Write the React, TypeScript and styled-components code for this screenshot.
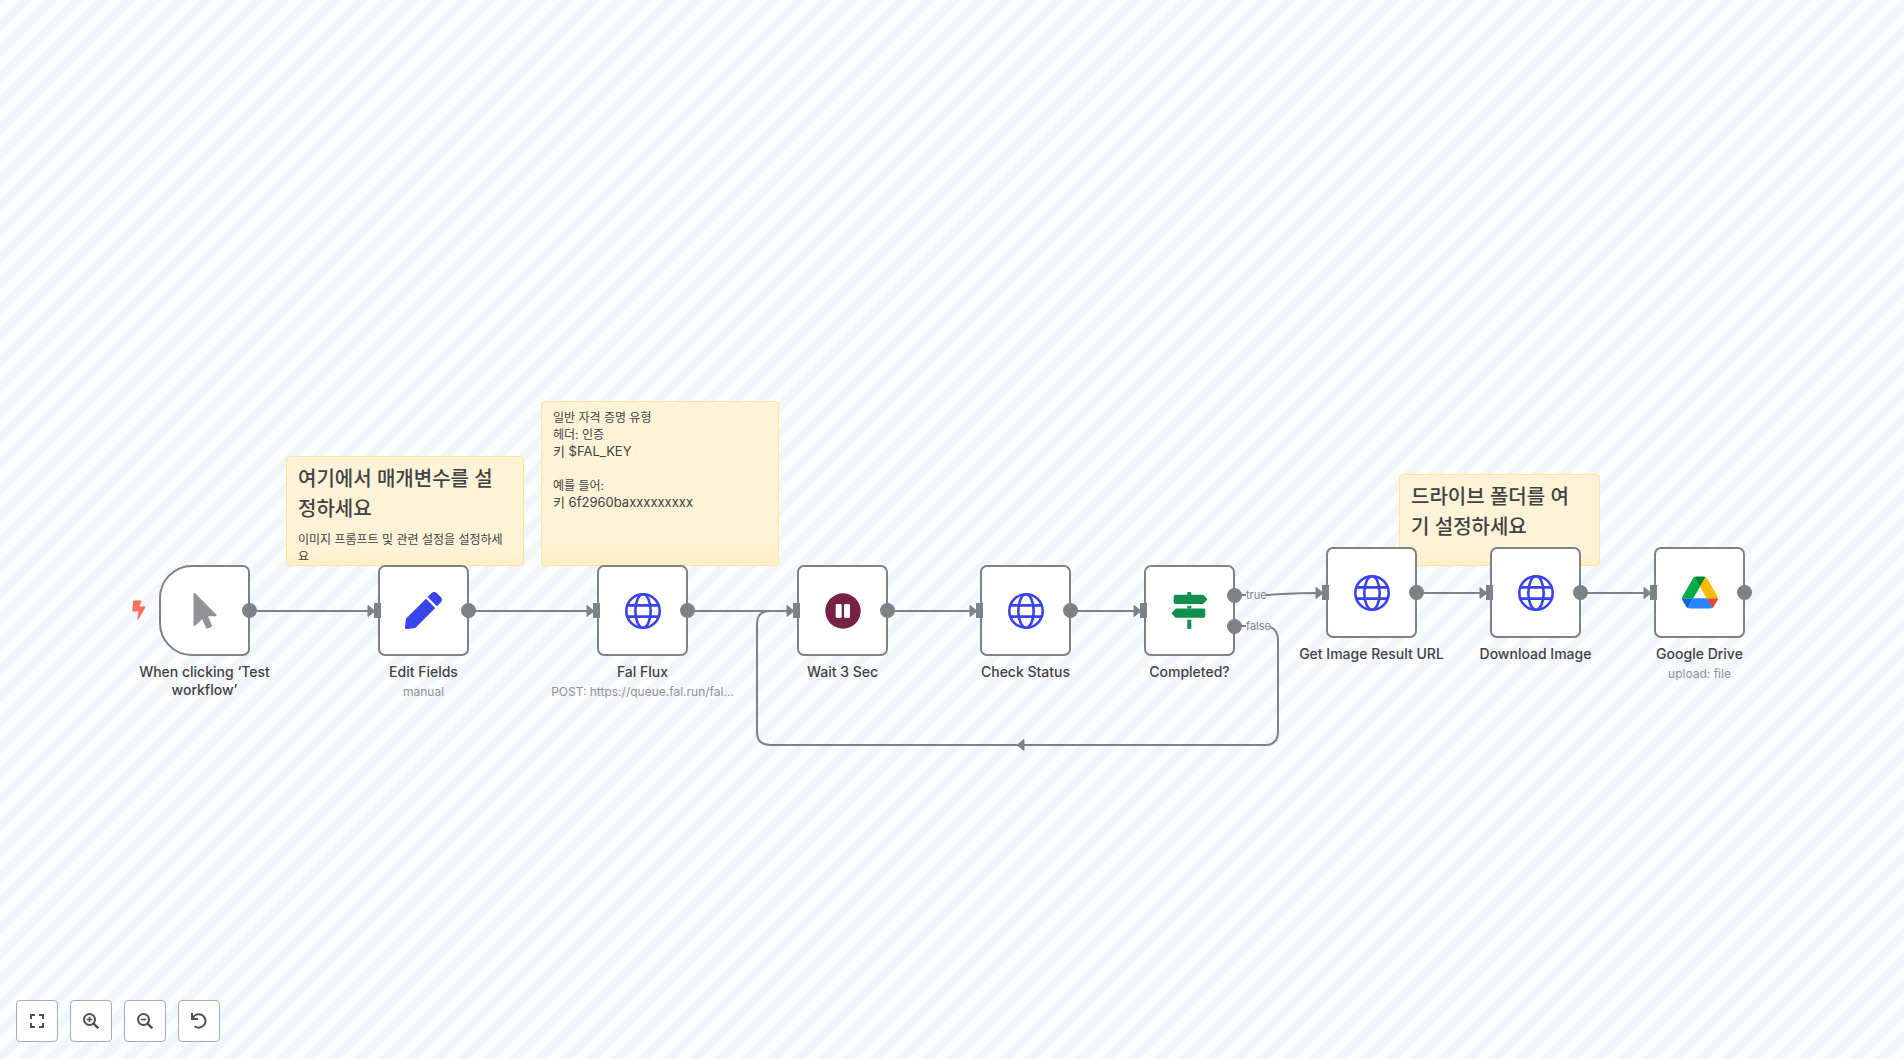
import React from "react";
import styled, { createGlobalStyle } from "styled-components";

const GRAY = "#7e8186";

const GlobalStyle = createGlobalStyle`
  * { box-sizing: border-box; }
  body { margin: 0; overflow: hidden; font-family: Inter, "Noto Sans CJK KR", sans-serif; color: #414244; }
`;

const Page = styled.main`
  position: relative;
  min-height: 100vh;
  display: flex;
  flex-direction: column;
  justify-content: flex-end;
  background: #f4f5fb;
`;

const Canvas = styled.div`
  position: absolute;
  inset: 0;
`;

const Layer = styled.svg`
  position: absolute;
  inset: 0;
  width: 100%;
  height: 100%;
`;

const Note = styled.section<{ $x: number; $y: number; $w: number; $h: number }>`
  position: absolute;
  left: ${(p) => p.$x}px;
  top: ${(p) => p.$y}px;
  width: ${(p) => p.$w}px;
  height: ${(p) => p.$h}px;
  padding: 7px 16px 6px 11px;
  overflow: hidden;
  border: 1px solid #fde59a;
  border-radius: 4px;
  background: linear-gradient(#fff3d7 85%, #ffefc6);
`;

const NoteTitle = styled.h2`
  margin: 0 0 7px;
  font-size: 20px;
  line-height: 30px;
  font-weight: 500;
  word-break: break-all;
`;

const NoteText = styled.p<{ $latin?: boolean }>`
  margin: 0;
  min-height: 17px;
  font-size: ${(p) => (p.$latin ? 13 : 12)}px;
  line-height: 17px;
  word-break: break-all;
`;

const NodeBox = styled.article<{ $x: number; $y: number }>`
  position: absolute;
  left: ${(p) => p.$x}px;
  top: ${(p) => p.$y}px;
  width: 91px;
  display: flex;
  flex-direction: column;
  align-items: center;
`;

const Tile = styled.div<{ $trigger?: boolean }>`
  position: relative;
  width: 91px;
  height: 91px;
  flex: none;
  display: flex;
  align-items: center;
  justify-content: center;
  background: #fff;
  border: 2px solid ${GRAY};
  border-radius: ${(p) => (p.$trigger ? "33px 7px 7px 33px" : "7px")};
`;

const Input = styled.span`
  position: absolute;
  left: -6px;
  top: 36px;
  width: 7px;
  height: 15px;
  background: ${GRAY};
`;

const Output = styled.span<{ $y: number }>`
  position: absolute;
  right: -9px;
  top: ${(p) => p.$y}px;
  width: 15px;
  height: 15px;
  border-radius: 50%;
  background: ${GRAY};
`;

const Bolt = styled.svg`
  position: absolute;
  left: -29px;
  top: 33px;
`;

const Name = styled.h3<{ $narrow?: boolean }>`
  margin: 7px 0 0;
  width: ${(p) => (p.$narrow ? 144 : 184)}px;
  font-size: 14px;
  line-height: 18px;
  font-weight: 500;
  text-align: center;
`;

const Subtitle = styled.p`
  margin: 2px 0 0;
  width: 184px;
  font-size: 12px;
  line-height: 18px;
  color: #909298;
  text-align: center;
  white-space: nowrap;
  overflow: hidden;
  text-overflow: ellipsis;
`;

const BranchLabel = styled.span<{ $x: number; $y: number }>`
  position: absolute;
  left: ${(p) => p.$x}px;
  top: ${(p) => p.$y}px;
  font-size: 11px;
  line-height: 14px;
  color: ${GRAY};
`;

const Controls = styled.nav`
  position: relative;
  display: flex;
  gap: 12px;
  padding: 16px 16px 17px;
`;

const ControlButton = styled.button`
  width: 42px;
  height: 42px;
  padding: 0;
  display: flex;
  align-items: center;
  justify-content: center;
  color: #4f5052;
  background: #fff;
  border: 1px solid #a5a9b9;
  border-radius: 4px;
`;

const Globe = () => (
  <svg width="36" height="36" viewBox="0 0 36 36" fill="none" stroke="#3a42e9" strokeWidth="2.6">
    <circle cx="18" cy="18" r="16.7" />
    <ellipse cx="18" cy="18" rx="7.7" ry="16.7" />
    <path d="M2 12.400h32M2 23.600h32" />
  </svg>
);

const Cursor = () => (
  <svg width="36" height="36" viewBox="0 0 36 36" fill="#909298">
    <path d="M6.500 1.200C6.500-.1 7.500-.3 8.400.5L29 21.200c.9.900.5 2-.8 2H21l3.800 8.900c.3.800 0 1.500-.7 1.800L20.700 35.400c-.8.300-1.500 0-1.800-.7L15.200 26 8.500 32.500c-.9.900-2 .5-2-.8z" />
  </svg>
);

const Pencil = () => (
  <svg width="37" height="37" viewBox="0 0 512 512" fill="#3a42e9">
    <path d="M290.700 93.200l128 128-278 278-114.100 12.600C11.300 513.500-1.600 500.600.1 485.300l12.700-114.200L290.700 93.200zm207.200-19.100l-60.100-60.100c-18.700-18.700-49.100-18.700-67.900 0L313.300 70.600l128 128 56.600-56.600c18.700-18.700 18.700-49.100 0-67.900z" />
  </svg>
);

const Pause = () => (
  <svg width="36" height="36" viewBox="0 0 36 36">
    <circle cx="18" cy="18" r="17.700" fill="#772244" />
    <rect x="10.700" y="11" width="6" height="14" rx="1.400" fill="#fff" />
    <rect x="19" y="11" width="6" height="14" rx="1.400" fill="#fff" />
  </svg>
);

const Signpost = () => (
  <svg width="37" height="37" viewBox="0 0 37 37" fill="#128f4c">
    <path d="M16.300 1q0-1 1-1h2q1 0 1 1v2h-4z" />
    <path d="M4.400 2.700H31.500q.8 0 1.400.6l3 3.200q.7.800 0 1.600l-3 3.200q-.6.600-1.400.6H4.400q-1.700 0-1.700-1.700V4.400q0-1.700 1.700-1.700z" />
    <path d="M16.300 13.800h4v2.800h-4z" />
    <path d="M32.600 16.600H5.500q-.8 0-1.400.6l-3 3.200q-.7.800 0 1.600l3 3.200q.6.600 1.400.6H32.600q1.700 0 1.700-1.700V18.300q0-1.700-1.700-1.700z" />
    <path d="M16.300 27.800h4V36q0 1-1 1h-2q-1 0-1-1z" />
  </svg>
);

const Drive = () => (
  <svg width="36" height="33" viewBox="0 0 87.3 78">
    <path d="m6.600 66.850 3.850 6.650c.8 1.400 1.950 2.500 3.300 3.300l13.750-23.800h-27.500c0 1.550.4 3.100 1.200 4.500z" fill="#0066da" />
    <path d="m43.650 25-13.750-23.800c-1.350.8-2.500 1.900-3.300 3.300l-25.400 44a9.060 9.060 0 0 0 -1.200 4.500h27.500z" fill="#00ac47" />
    <path d="m73.550 76.800c1.350-.8 2.500-1.900 3.300-3.300l1.600-2.750 7.650-13.250c.8-1.400 1.200-2.950 1.200-4.500h-27.500l5.850 11.500z" fill="#ea4335" />
    <path d="m43.650 25 13.750-23.800c-1.350-.8-2.900-1.200-4.500-1.200h-18.500c-1.600 0-3.150.45-4.500 1.200z" fill="#00832d" />
    <path d="m59.800 53h-32.300l-13.750 23.800c1.350.8 2.900 1.200 4.500 1.200h50.800c1.600 0 3.150-.45 4.500-1.200z" fill="#2684fc" />
    <path d="m73.400 26.500-12.700-22c-.8-1.400-1.950-2.500-3.300-3.300l-13.750 23.800 16.150 28h27.450c0-1.550-.4-3.100-1.200-4.500z" fill="#ffba00" />
  </svg>
);

type FlowNode = {
  x: number;
  y: number;
  name: string;
  subtitle?: string;
  icon: React.ReactNode;
  trigger?: boolean;
  outputs?: number[];
};

const nodes: FlowNode[] = [
  { x: 159, y: 565, name: "When clicking ‘Test workflow’", icon: <Cursor />, trigger: true },
  { x: 378, y: 565, name: "Edit Fields", subtitle: "manual", icon: <Pencil /> },
  { x: 597, y: 565, name: "Fal Flux", subtitle: "POST: https://queue.fal.run/fal...", icon: <Globe /> },
  { x: 797, y: 565, name: "Wait 3 Sec", icon: <Pause /> },
  { x: 980, y: 565, name: "Check Status", icon: <Globe /> },
  { x: 1144, y: 565, name: "Completed?", icon: <Signpost />, outputs: [21, 52] },
  { x: 1326, y: 547, name: "Get Image Result URL", icon: <Globe /> },
  { x: 1490, y: 547, name: "Download Image", icon: <Globe /> },
  { x: 1654, y: 547, name: "Google Drive", subtitle: "upload: file", icon: <Drive /> },
];

const wires = [
  "M250 611H372",
  "M469 611H591",
  "M688 611H791",
  "M888 611H974",
  "M1071 611H1138",
  "M1235 595H1246M1266 595C1285 594 1295 593 1320 593",
  "M1417 593H1484",
  "M1581 593H1648",
  "M1235 626H1246M1270 627Q1278 630 1278 640V732Q1278 745 1265 745H770Q757 745 757 732V624Q757 611 770 611H791",
];

const credentialLines = [
  { text: "일반 자격 증명 유형" },
  { text: "헤더: 인증" },
  { text: "키 $FAL_KEY", latin: true },
  { text: "" },
  { text: "예를 들어:" },
  { text: "키 6f2960baxxxxxxxxx", latin: true },
];

export default function App() {
  return (
    <>
      <GlobalStyle />
      <Page>
        <Canvas>
          <Layer aria-hidden="true">
            <defs>
              <pattern id="stripes" width="20" height="20" patternUnits="userSpaceOnUse" patternTransform="scale(0.912) rotate(-45)">
                <rect y="5" width="20" height="10" fill="#fcfdff" />
              </pattern>
            </defs>
            <rect width="100%" height="100%" fill="url(#stripes)" />
          </Layer>
          <Note $x={286} $y={456} $w={238} $h={110}>
            <NoteTitle>여기에서 매개변수를 설정하세요</NoteTitle>
            <NoteText>이미지 프롬프트 및 관련 설정을 설정하세요</NoteText>
          </Note>
          <Note $x={541} $y={401} $w={238} $h={165}>
            {credentialLines.map((line, i) => (
              <NoteText key={i} $latin={line.latin}>
                {line.text}
              </NoteText>
            ))}
          </Note>
          <Note $x={1399} $y={474} $w={201} $h={92}>
            <NoteTitle>드라이브 폴더를 여기 설정하세요</NoteTitle>
          </Note>
          <Layer aria-hidden="true">
            <g fill="none" stroke={GRAY} strokeWidth="2">
              {wires.map((d) => (
                <path key={d} d={d} />
              ))}
            </g>
            <g fill={GRAY} stroke={GRAY} strokeLinejoin="round">
              {nodes.slice(1).map((n) => (
                <path key={n.name} d={`M${n.x - 10} ${n.y + 40.5}l7 5.500-7 5.500z`} />
              ))}
              <path d="M1024 739.500l-7 5.500 7 5.500z" />
            </g>
          </Layer>
          {nodes.map((n) => (
            <NodeBox key={n.name} $x={n.x} $y={n.y}>
              <Tile $trigger={n.trigger}>
                {n.icon}
                {!n.trigger && <Input />}
                {(n.outputs ?? [36]).map((y) => (
                  <Output key={y} $y={y} />
                ))}
                {n.trigger && (
                  <Bolt width="14" height="20" viewBox="0 0 14 20" fill="#ff6f5c">
                    <path d="M2 .5h7.500L7.500 6.500H13c.4 0 .6.400.4.800L6.300 19.500c-.3.500-1.100.3-1-.3L6.500 11.500H1c-.500 0-.800-.4-.8-.9L1.200 1.200C1.300.8 1.600.5 2 .5z" />
                  </Bolt>
                )}
              </Tile>
              <Name $narrow={n.trigger}>{n.name}</Name>
              {n.subtitle && <Subtitle>{n.subtitle}</Subtitle>}
            </NodeBox>
          ))}
          <BranchLabel $x={1246} $y={588}>true</BranchLabel>
          <BranchLabel $x={1246} $y={619}>false</BranchLabel>
        </Canvas>
        <Controls aria-label="Canvas controls">
          <ControlButton aria-label="Fit to view">
            <svg width="14" height="14" viewBox="0 0 14 14" fill="none" stroke="currentColor" strokeWidth="2">
              <path d="M1 5V1h4M9 1h4v4M13 9v4H9M5 13H1V9" />
            </svg>
          </ControlButton>
          <ControlButton aria-label="Zoom in">
            <svg width="16" height="16" viewBox="0 0 16 16" fill="none" stroke="currentColor" strokeWidth="2">
              <circle cx="6.500" cy="6.500" r="5.500" />
              <path d="M10.500 10.500l4.800 4.800" strokeWidth="2.400" />
              <path d="M6.500 3.700v5.600M3.700 6.500h5.600" strokeWidth="1.600" />
            </svg>
          </ControlButton>
          <ControlButton aria-label="Zoom out">
            <svg width="16" height="16" viewBox="0 0 16 16" fill="none" stroke="currentColor" strokeWidth="2">
              <circle cx="6.500" cy="6.500" r="5.500" />
              <path d="M10.500 10.500l4.800 4.800" strokeWidth="2.400" />
              <path d="M3.700 6.500h5.600" strokeWidth="1.600" />
            </svg>
          </ControlButton>
          <ControlButton aria-label="Reset zoom">
            <svg width="16" height="16" viewBox="0 0 16 16" fill="none" stroke="currentColor" strokeWidth="2">
              <path d="M1 0v6h6M1.500 5.500A6.700 6.700 0 1 1 3.600 13.200" />
            </svg>
          </ControlButton>
        </Controls>
      </Page>
    </>
  );
}
